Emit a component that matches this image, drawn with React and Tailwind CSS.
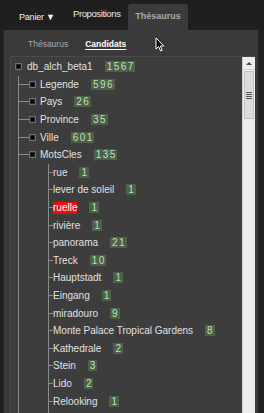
import React from "react";

const Badge = ({ n, gap = "ml-[12px]" }) => (
  <span className={`${gap} pl-[2px] pr-[0.5px] h-[11px] leading-[11px] bg-[#4f5f4b] text-[#b6e6ad] text-[10px] tracking-[1.5px]`}>{n}</span>
);

const Expander = () => (
  <span className="w-[7px] h-[7px] border border-[#6f6f6f] bg-[#262626] shrink-0 flex items-center justify-center">
    <span className="w-[3px] h-[3px] bg-black" />
  </span>
);

const Row = ({ children }) => (
  <div className="h-[17.6px] flex items-center whitespace-nowrap">{children}</div>
);

const level1 = [
  { label: "Legende", count: 596 },
  { label: "Pays", count: 26 },
  { label: "Province", count: 35 },
  { label: "Ville", count: 601 },
];

const motsCles = [
  { label: "rue", count: 1 },
  { label: "lever de soleil", count: 1 },
  { label: "ruelle", count: 1, selected: true },
  { label: "rivière", count: 1 },
  { label: "panorama", count: 21 },
  { label: "Treck", count: 10 },
  { label: "Hauptstadt", count: 1 },
  { label: "Eingang", count: 1 },
  { label: "miradouro", count: 9 },
  { label: "Monte Palace Tropical Gardens", count: 8 },
  { label: "Kathedrale", count: 2 },
  { label: "Stein", count: 3 },
  { label: "Lido", count: 2 },
  { label: "Relooking", count: 1 },
];

const Level1Row = ({ label, count }) => (
  <Row>
    <span className="w-[10px] h-px bg-[#8a8a8a]" />
    <Expander />
    <span className="ml-[4px]">{label}</span>
    <Badge n={count} />
  </Row>
);

export default function App() {
  return (
    <div className="relative w-[264px] h-[413px] overflow-hidden bg-[#1f1f1f] text-[#e2e2e2] flex flex-col" style={{ fontFamily: '"Liberation Sans", Arial, sans-serif' }}>
      {/* top tabs */}
      <div className="h-[30px] flex items-end shrink-0">
        <span className="ml-[19px] mb-[6px] w-[54px] text-[9px] tracking-[-0.2px] text-[#f0f0f0]">Panier ▼</span>
        <span className="mb-[9px] w-[55px] text-[9.5px] tracking-[-0.4px] text-[#e8e8e8]">Propositions</span>
        <div className="w-[60px] h-[26px] rounded-t-[3px] bg-[#3b3b3b] flex items-center justify-center text-[9px] font-bold text-[#a9a9a9]">
          Thésaurus
        </div>
      </div>

      {/* panel */}
      <div className="flex-1 ml-[3px] mr-[5px] bg-[#3a3a3a] border-l border-r border-[#2a2a2a] flex flex-col">
        <div className="h-[26px] shrink-0 flex items-center pt-[2px] text-[8.5px]">
          <span className="ml-[24px] text-[#a8a8a8]">Thésaurus</span>
          <span className="ml-[17px] font-bold text-white underline underline-offset-2">Candidats</span>
        </div>

        <div className="flex-1 ml-[6px] mr-[3px] flex border-l border-t border-[#4a4a4a] bg-[#3d3d3d] overflow-hidden">
          {/* tree */}
          <div className="flex-1 pl-[4px] pt-[1px] text-[10px] text-[#e0e0e0]">
            <Row>
              <Expander />
              <span className="ml-[5px]">db_alch_beta1</span>
              <Badge n={1567} />
            </Row>
            <div className="ml-[3px] border-l border-[#8a8a8a]">
              {level1.map((i) => (
                <Level1Row key={i.label} {...i} />
              ))}
              <Level1Row label="MotsCles" count={135} />
              <div className="ml-[29px] border-l border-[#8a8a8a]">
                {motsCles.map((i) => (
                  <Row key={i.label}>
                    <span className="w-[4px] h-px bg-[#8a8a8a]" />
                    <span className={i.selected ? "bg-[#e8100f] text-white leading-[12px]" : ""}>{i.label}</span>
                    <Badge n={i.count} />
                  </Row>
                ))}
                <div className="h-[17.6px]" />
              </div>
            </div>
          </div>

          {/* scrollbar */}
          <div className="w-[13px] shrink-0 bg-[#ececec] border-l border-[#cfcfcf] flex flex-col">
            <div className="h-[13px] flex items-center justify-center border-b border-[#d6d6d6]">
              <span className="w-0 h-0 border-l-[3px] border-r-[3px] border-b-[3px] border-l-transparent border-r-transparent border-b-[#444]" />
            </div>
            <div className="mt-[1px] h-[48px] mx-[1px] bg-[#dcdcdc] border border-[#c4c4c4] flex flex-col items-center justify-center gap-[1px]">
              <span className="w-[6px] h-px bg-[#555]" />
              <span className="w-[6px] h-px bg-[#555]" />
              <span className="w-[6px] h-px bg-[#555]" />
              <span className="w-[6px] h-px bg-[#555]" />
            </div>
            <div className="flex-1" />
            <div className="h-[10px] flex items-center justify-center">
              <span className="w-0 h-0 border-l-[3px] border-r-[3px] border-t-[3px] border-l-transparent border-r-transparent border-t-[#444]" />
            </div>
          </div>
        </div>
      </div>

      {/* mouse cursor */}
      <svg className="absolute left-[155px] top-[37px]" width="10" height="15" viewBox="0 0 10 15">
        <path d="M1 1 L1 12 L3.6 9.6 L5.6 14 L7.2 13.3 L5.3 9 L8.8 9 Z" fill="#000" stroke="#fff" strokeWidth="1" />
      </svg>
    </div>
  );
}
